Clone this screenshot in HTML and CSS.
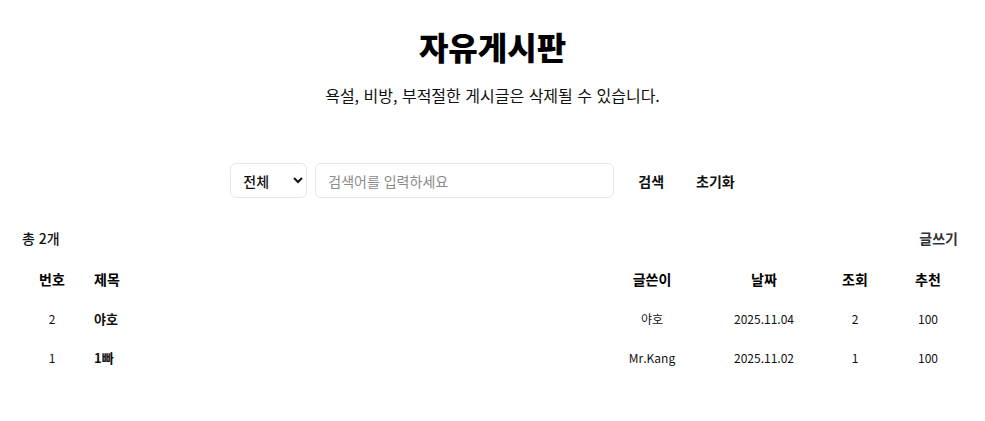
FILE: index.html
```html
<!DOCTYPE html>
<html lang="ko">
<head>
<meta charset="utf-8">
<title>자유게시판</title>
<link rel="stylesheet" href="styles.css">
</head>
<body>
<div class="page">
  <header class="board-head">
    <h1 class="board-title">자유게시판</h1>
    <p class="board-desc">욕설, 비방, 부적절한 게시글은 삭제될 수 있습니다.</p>
  </header>

  <form class="search" onsubmit="return false;">
    <select class="search-select">
      <option>전체</option>
      <option>제목</option>
      <option>글쓴이</option>
    </select>
    <input class="search-input" type="text" placeholder="검색어를 입력하세요">
    <div class="search-btns">
      <button class="btn" type="submit">검색</button>
      <button class="btn" type="reset">초기화</button>
    </div>
  </form>

  <div class="toolbar">
    <span class="total">총 2개</span>
    <button class="btn-write" type="button">글쓰기</button>
  </div>

  <table class="board">
    <colgroup>
      <col class="c-no">
      <col class="c-title">
      <col class="c-author">
      <col class="c-date">
      <col class="c-views">
      <col class="c-likes">
    </colgroup>
    <thead>
      <tr>
        <th>번호</th>
        <th class="left">제목</th>
        <th>글쓴이</th>
        <th>날짜</th>
        <th>조회</th>
        <th>추천</th>
      </tr>
    </thead>
    <tbody>
      <tr>
        <td>2</td>
        <td class="title">야호</td>
        <td>야호</td>
        <td>2025.11.04</td>
        <td>2</td>
        <td>100</td>
      </tr>
      <tr>
        <td>1</td>
        <td class="title">1빠</td>
        <td>Mr.Kang</td>
        <td>2025.11.02</td>
        <td>1</td>
        <td>100</td>
      </tr>
    </tbody>
  </table>
</div>
</body>
</html>
```

FILE: styles.css
```css
* {
  box-sizing: border-box;
}

html, body {
  margin: 0;
  padding: 0;
  background: #ffffff;
}

body {
  font-family: "Noto Sans CJK KR", "Noto Sans", sans-serif;
  color: #111111;
}

.page {
  padding: 0 22px;
}

.board-head {
  text-align: center;
  padding-top: 23px;
}

.board-title {
  margin: 0;
  font-size: 32px;
  line-height: 46px;
  font-weight: 800;
  color: #000000;
}

.board-desc {
  margin: 15px 0 0;
  font-size: 16px;
  line-height: 22px;
  color: #111111;
}

.search {
  margin-top: 57px;
  padding-right: 4px;
  display: flex;
  justify-content: center;
  gap: 8px;
  height: 35px;
}

.search-select {
  width: 77px;
  height: 35px;
  padding: 0 7px 0 8px;
  border: 1px solid #e6e6e6;
  border-radius: 6px;
  background: #ffffff;
  font-family: inherit;
  font-size: 14px;
  font-weight: 500;
  color: #111111;
}

.search-input {
  width: 299px;
  height: 35px;
  padding: 0 12px;
  border: 1px solid #e6e6e6;
  border-radius: 6px;
  font-family: inherit;
  font-size: 14px;
  color: #111111;
  outline: none;
}

.search-input::placeholder {
  color: #8a8a8a;
}

.search-btns {
  display: flex;
}

.btn {
  height: 35px;
  padding: 0 16px;
  border: none;
  background: transparent;
  font-family: inherit;
  font-size: 14px;
  font-weight: 700;
  color: #111111;
  cursor: pointer;
}

.toolbar {
  margin-top: 30px;
  display: flex;
  justify-content: space-between;
  align-items: center;
  height: 20px;
}

.total {
  font-size: 14px;
  line-height: 20px;
  font-weight: 500;
  color: #111111;
}

.btn-write {
  padding: 0 5px;
  border: none;
  background: transparent;
  font-family: inherit;
  font-size: 14px;
  line-height: 20px;
  font-weight: 700;
  color: #333333;
  cursor: pointer;
}

.board {
  margin-top: 11px;
  width: 100%;
  border-collapse: collapse;
  table-layout: fixed;
}

.c-no { width: 60px; }
.c-author { width: 118px; }
.c-date { width: 106px; }
.c-views { width: 76px; }
.c-likes { width: 70px; }

.board th {
  padding: 10px 0;
  font-size: 14px;
  line-height: 20px;
  font-weight: 700;
  color: #000000;
  text-align: center;
}

.board td {
  padding: 10px 0;
  font-size: 12px;
  line-height: 19px;
  color: #111111;
  text-align: center;
}

.board th.left,
.board td.title {
  text-align: left;
  padding-left: 12px;
}

.board td.title {
  font-size: 13px;
  font-weight: 700;
}
```
